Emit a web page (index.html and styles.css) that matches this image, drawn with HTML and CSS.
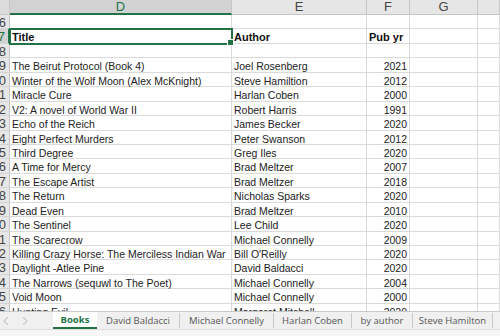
FILE: index.html
```html
<!DOCTYPE html>
<html>
<head>
    <title>Books</title>
    <link rel="stylesheet" href="styles.css">
</head>
<body>
    <div class="sheet">
        <div class="grid" id="grid">
            <div class="ch corner"></div>
            <div class="ch sel">D</div>
            <div class="ch">E</div>
            <div class="ch">F</div>
            <div class="ch">G</div>
            <div class="ch"></div>
        </div>
    </div>

    <div class="tabbar">
        <div class="tabs">
            <div class="nav">
                <svg width="6" height="8" viewBox="0 0 6 8"><path d="M5 0 L1 4 L5 8" fill="none" stroke="#c8c8c8" stroke-width="1.2"/></svg>
                <svg width="6" height="8" viewBox="0 0 6 8"><path d="M1 0 L5 4 L1 8" fill="none" stroke="#c8c8c8" stroke-width="1.2"/></svg>
            </div>
            <div class="tab active w-books">Books</div>
            <div class="tab w-db">David Baldacci</div>
            <div class="tab w-mc">Michael Connelly</div>
            <div class="tab w-hc">Harlan Coben</div>
            <div class="tab w-ba">by author</div>
            <div class="tab w-sh">Steve Hamilton</div>
        </div>
        <div class="status"></div>
    </div>

    <script>
        const books = [
            ['The Beirut Protocol (Book 4)', 'Joel Rosenberg', 2021],
            ['Winter of the Wolf Moon (Alex McKnight)', 'Steve Hamiltion', 2012],
            ['Miracle Cure', 'Harlan Coben', 2000],
            ['V2: A novel of World War II', 'Robert Harris', 1991],
            ['Echo of the Reich', 'James Becker', 2020],
            ['Eight Perfect Murders', 'Peter Swanson', 2012],
            ['Third Degree', 'Greg Iles', 2020],
            ['A Time for Mercy', 'Brad Meltzer', 2007],
            ['The Escape Artist', 'Brad Meltzer', 2018],
            ['The Return', 'Nicholas Sparks', 2020],
            ['Dead Even', 'Brad Meltzer', 2010],
            ['The Sentinel', 'Lee Child', 2020],
            ['The Scarecrow', 'Michael Connelly', 2009],
            ['Killing Crazy Horse: The Merciless Indian War', "Bill O'Reilly", 2020],
            ['Daylight -Atlee Pine', 'David Baldacci', 2020],
            ['The Narrows (sequwl to The Poet)', 'Michael Connelly', 2004],
            ['Void Moon', 'Michael Connelly', 2000],
            ['Hunting Evil', 'Margaret Mitchell', 2020]
        ];

        const grid = document.getElementById('grid');

        function addRow(num, cells, cls) {
            const rh = document.createElement('div');
            rh.className = 'rh' + (cls ? ' ' + cls : '');
            rh.innerHTML = '<span>' + num + '</span>';
            grid.appendChild(rh);
            cells.forEach((text, i) => {
                const c = document.createElement('div');
                c.className = 'c' + (i === 2 && typeof text === 'number' ? ' num' : '');
                if (cls === 'head') c.className += ' bold';
                if (cls === 'head' && i === 0) c.className += ' active';
                c.textContent = text;
                grid.appendChild(c);
            });
        }

        addRow(6, ['', '', '', '', '']);
        addRow(7, ['Title', 'Author', 'Pub yr', '', ''], 'head');
        addRow(8, ['', '', '', '', '']);
        books.forEach((b, i) => addRow(9 + i, [b[0], b[1], b[2], '', '']));
    </script>
</body>
</html>
```

FILE: styles.css
```css
body { margin: 0; width: 500px; height: 336px; overflow: hidden; font-family: "Liberation Sans", Arial, sans-serif; background: #fff; }

.sheet { height: 311px; overflow: hidden; }
.grid { display: grid; grid-template-columns: 10px 222px 135px 43px 68px 22px; grid-auto-rows: 14.45px; grid-template-rows: 15px; }

.ch { background: #e6e6e6; border-right: 1px solid #c6c6c6; border-bottom: 1px solid #c6c6c6; box-sizing: border-box;
      font-size: 13px; color: #444; text-align: center; line-height: 14px; }
.ch.sel { background: #d2d2d2; color: #217346; border-bottom: 2px solid #217346; }
.ch.corner { background: #dcdcdc; }

.rh { background: #e6e6e6; border-right: 1px solid #c6c6c6; border-bottom: 1px solid #d4d4d4; box-sizing: border-box;
      display: flex; justify-content: flex-end; overflow: hidden; font-size: 13px; color: #444; line-height: 14px; padding: 1px 3px 0 0; }
.rh.head { background: #d2d2d2; color: #217346; border-right: 2px solid #217346; }

.c { border-right: 1px solid #dadada; border-bottom: 1px solid #dadada; box-sizing: border-box; font-size: 10.5px; color: #222;
     padding: 2px 2px 0; line-height: 12px; white-space: nowrap; overflow: visible; }
.c.num { text-align: right; }
.c.bold { font-weight: bold; font-size: 11px; color: #111; }
.c.active { position: relative; outline: 2px solid #217346; outline-offset: -1px; z-index: 1; }
.c.active::after { content: ""; position: absolute; right: -3px; bottom: -3px; width: 5px; height: 5px; background: #217346; border: 1px solid #fff; }

.tabbar { height: 25px; background: #f0f0f0; border-top: 1px solid #c8c8c8; box-sizing: border-box; }
.tabs { display: flex; height: 17px; align-items: stretch; overflow: hidden; }
.nav { display: flex; align-items: center; gap: 13px; width: 53px; flex-shrink: 0; padding-left: 3px; box-sizing: border-box; }
.tab { font-family: "Open Sans", "Liberation Sans", sans-serif; font-size: 9.5px; color: #555; line-height: 15px; text-align: center;
       border-right: 1px solid #c8c8c8; margin: 1px 0; white-space: nowrap; flex-shrink: 0; box-sizing: border-box; overflow: hidden; }
.tab.active { background: #fff; color: #217346; font-weight: bold; border-bottom: 2px solid #217346; margin: -1px 0 0; border-right: none; line-height: 17px; }
.w-books { width: 44px; }
.w-db { width: 83px; }
.w-mc { width: 94px; }
.w-hc { width: 78px; }
.w-ba { width: 61px; }
.w-sh { width: 80px; }
.status { height: 7px; border-top: 1px solid #e0e0e0; background: #f6f6f6; }
```
